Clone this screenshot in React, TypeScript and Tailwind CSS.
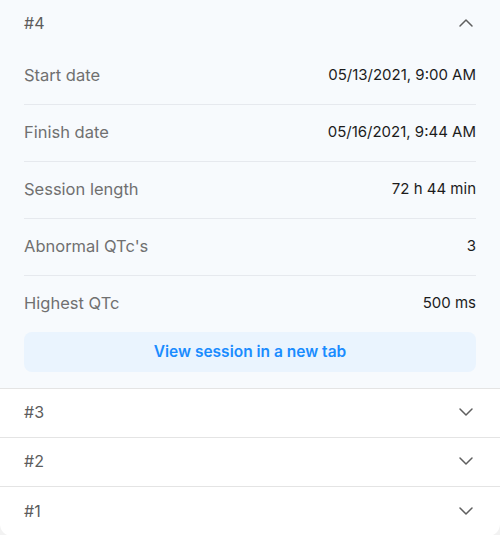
import React from "react";

const Chevron = ({ up }: { up?: boolean }) => (
  <svg width="24" height="24" viewBox="0 0 24 24" fill="none" stroke="#5f5f5f" strokeWidth="1.5" strokeLinecap="round" strokeLinejoin="round" className="-mr-0.5">
    {up ? <path d="m6 15 6-6 6 6" /> : <path d="m6 9 6 6 6-6" />}
  </svg>
);

const rows: [string, string][] = [
  ["Start date", "05/13/2021, 9:00 AM"],
  ["Finish date", "05/16/2021, 9:44 AM"],
  ["Session length", "72 h 44 min"],
  ["Abnormal QTc's", "3"],
  ["Highest QTc", "500 ms"],
];

export default function App() {
  return (
    <div className="w-[500px] h-[535px] bg-[#f2f2f2]" style={{ fontFamily: "Inter, 'Noto Sans', sans-serif" }}>
      <div className="bg-white rounded-b-[12px] overflow-hidden">
        <div className="bg-[#f7fafd] border-b border-[#e4e4e4] px-6 pb-4">
          <div className="h-12 pb-[2px] flex items-center justify-between">
            <span className="text-[16px] text-[#5c5c5c]">#4</span>
            <Chevron up />
          </div>
          {rows.map(([k, v], i) => (
            <div key={k} className={`pb-[2px] flex items-center justify-between ${i < rows.length - 1 ? "border-b border-[#e6e9ee] h-[57px]" : "h-14"}`}>
              <span className="text-[16.5px] text-[#707070]">{k}</span>
              <span className="text-[15px] text-[#1c1c1c]">{v}</span>
            </div>
          ))}
          <button className="w-full h-10 rounded-lg bg-[#eaf4fe] text-[#1a8cff] text-[15.5px] font-semibold">
            View session in a new tab
          </button>
        </div>
        {["#3", "#2", "#1"].map((t, i) => (
          <div key={t} className={`h-[49px] pb-[2px] px-6 flex items-center justify-between ${i < 2 ? "border-b border-[#e4e4e4]" : ""}`}>
            <span className="text-[16px] text-[#5c5c5c]">{t}</span>
            <Chevron />
          </div>
        ))}
      </div>
    </div>
  );
}
